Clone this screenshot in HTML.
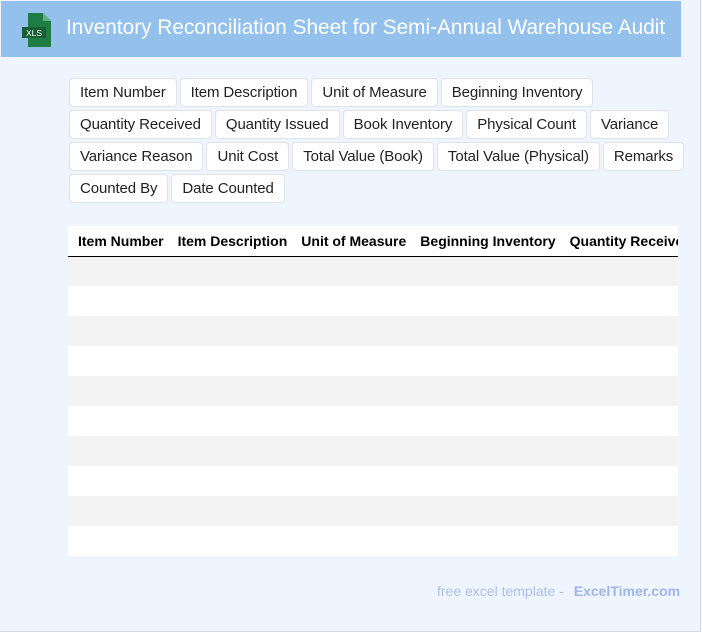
<!DOCTYPE html>
<html><head><style>
*{margin:0;padding:0;box-sizing:border-box}
html,body{width:702px;height:632px;overflow:hidden}
body{background:#eef5fe;font-family:"Liberation Sans",Arial,sans-serif;position:relative}
.frame{position:absolute;left:0;top:0;width:701px;height:632px;border-right:1px solid #d3dbe5;border-bottom:1px solid #d3dbe5}
.hdr{position:absolute;left:1px;top:1px;width:680px;height:56px;background:#93c1eb}
.hdr h1{position:absolute;left:65px;top:15px;font-size:20.8px;font-weight:normal;color:#fff;white-space:nowrap}
.icon{position:absolute;left:20px;top:12px}
.chips{position:absolute;left:69px;top:78px;width:640px}
.chip{display:inline-block;float:left;height:29px;line-height:28px;padding:0 10px;margin:0 3px 3px 0;background:#fff;border:1px solid #dfe3e8;border-radius:4px;font-size:15px;color:#222;letter-spacing:-0.1px}
.row{clear:both;overflow:hidden;height:32px}
.tbl{position:absolute;left:68px;top:226px;width:610px;overflow:hidden;background:#fff}
table{border-collapse:collapse;white-space:nowrap}
th{font-size:14px;font-weight:bold;text-align:left;height:30px;padding:0 4px 0 10px;border-bottom:1.5px solid #000;color:#000}
td{height:30px}
tr.g td{background:#f3f3f3}
.foot{position:absolute;left:437px;top:583px;font-size:14px;color:#aebdeb;white-space:nowrap}
.foot b{color:#9fb4ea;margin-left:6px}
</style></head><body>
<div class="frame"></div>
<div class="hdr">
<svg class="icon" width="32" height="34" viewBox="0 0 32 34"><path d="M7 0h15l8 8v26H7z" fill="#1e7d45"/><path d="M22 0l8 8h-8z" fill="#5fb587"/><rect x="1" y="14" width="24" height="11" fill="#165f35"/><text x="5" y="23" font-size="8.5" fill="#fff" font-family="Liberation Sans,sans-serif">XLS</text></svg>
<h1>Inventory Reconciliation Sheet for Semi-Annual Warehouse Audit</h1>
</div>
<div class="chips">
<div class="row"><span class="chip">Item Number</span><span class="chip">Item Description</span><span class="chip">Unit of Measure</span><span class="chip">Beginning Inventory</span></div>
<div class="row"><span class="chip">Quantity Received</span><span class="chip">Quantity Issued</span><span class="chip">Book Inventory</span><span class="chip">Physical Count</span><span class="chip">Variance</span></div>
<div class="row"><span class="chip">Variance Reason</span><span class="chip">Unit Cost</span><span class="chip">Total Value (Book)</span><span class="chip">Total Value (Physical)</span><span class="chip">Remarks</span></div>
<div class="row"><span class="chip">Counted By</span><span class="chip">Date Counted</span></div>
</div>
<div class="tbl"><table>
<tr><th>Item Number</th><th>Item Description</th><th>Unit of Measure</th><th>Beginning Inventory</th><th>Quantity Received</th><th>Quantity Issued</th></tr>
<tr class="g"><td colspan="6"></td></tr><tr><td colspan="6"></td></tr>
<tr class="g"><td colspan="6"></td></tr><tr><td colspan="6"></td></tr>
<tr class="g"><td colspan="6"></td></tr><tr><td colspan="6"></td></tr>
<tr class="g"><td colspan="6"></td></tr><tr><td colspan="6"></td></tr>
<tr class="g"><td colspan="6"></td></tr><tr><td colspan="6"></td></tr>
</table></div>
<div class="foot">free excel template - <b>ExcelTimer.com</b></div>
</body></html>
